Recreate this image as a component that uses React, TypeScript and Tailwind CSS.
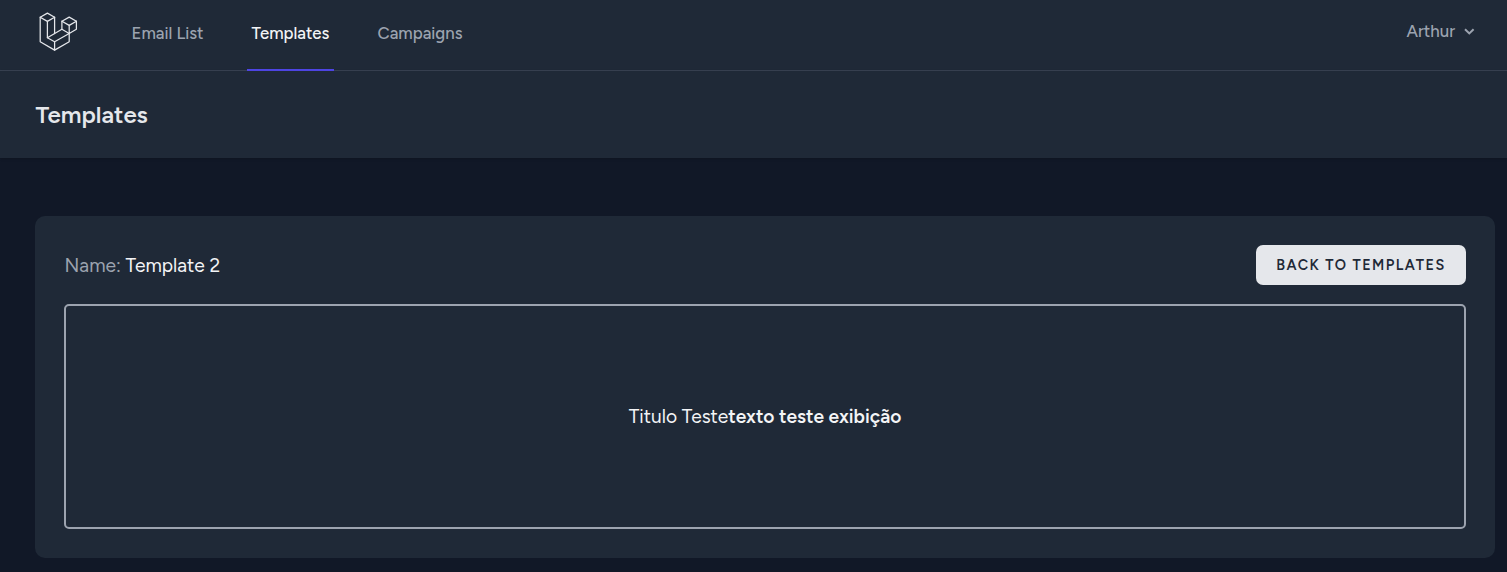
import React from "react";

function Logo() {
  return (
    <svg className="block h-10 w-10" viewBox="0 0 40 40" fill="none" stroke="#e5e7eb" strokeWidth="1.25" strokeLinejoin="round" strokeLinecap="round">
      <path d="M2.2 6.2 9.4 2.1 16.6 6.2 9.4 10.4Z" />
      <path d="M2.2 6.2V30.8L16.6 39.1 31.2 30.8V22.5" />
      <path d="M9.4 10.4V26.7L16.6 30.8V39.1" />
      <path d="M16.6 6.2V22.5" />
      <path d="M9.4 26.7 23.9 18.3 31.2 22.5 16.6 30.8" />
      <path d="M23.9 10.2 31.2 6.1 38.4 10.2 31.2 14.4Z" />
      <path d="M23.9 10.2V18.3M38.4 10.2V18.3L31.2 22.5V14.4" />
    </svg>
  );
}

export default function App() {
  return (
    <div className="flex h-[572px] w-full flex-col overflow-hidden bg-[#111827] font-['Figtree','Inter',sans-serif]">
      <nav className="flex h-[71px] shrink-0 items-stretch justify-between border-b border-[#374151] bg-[#1f2937] pr-[31px] pl-[38px]">
        <div className="flex">
          <div className="pt-[11px]">
            <Logo />
          </div>
          <div className="-mb-px ml-[50px] flex gap-10 text-[16.8px] leading-6 font-medium text-[#9ca3af]">
            <a className="w-[79px] border-b-2 border-transparent pt-[21px] text-center whitespace-nowrap">Email List</a>
            <a className="w-[87px] border-b-2 border-[#4f46e5] pt-[21px] text-center whitespace-nowrap text-[#f3f4f6]">Templates</a>
            <a className="w-[92px] border-b-2 border-transparent pt-[21px] text-center whitespace-nowrap">Campaigns</a>
          </div>
        </div>
        <button className="mt-[19px] flex h-6 items-center gap-[7px] text-[16.8px] leading-6 font-medium text-[#9ca3af]">
          <span>Arthur</span>
          <svg className="h-[14px] w-[14px]" viewBox="0 0 14 14" fill="none" stroke="currentColor" strokeWidth="2">
            <path d="M3 5.2 7.3 9.4 11.6 5.2" />
          </svg>
        </button>
      </nav>
      <header className="flex h-[87px] shrink-0 items-center bg-[#1f2937] pl-[35.4px] shadow">
        <h2 className="text-[24px] leading-7 font-semibold text-[#e5e7eb]">Templates</h2>
      </header>
      <main className="pt-[58px] pr-3 pl-[35px]">
        <section className="h-[342px] rounded-[10px] bg-[#1f2937] p-[29px] text-[19.2px] leading-[29px] text-[#f3f4f6]">
          <div className="flex h-10 items-center justify-between">
            <div className="pl-[0.5px]">
              <span className="text-[#9ca3af]">Name:</span> Template 2
            </div>
            <button className="h-10 w-[210px] rounded-[7px] bg-[#e5e7eb] text-[14.4px] font-semibold tracking-[1.44px] text-[#1f2937]">BACK TO TEMPLATES</button>
          </div>
          <div className="mt-[19px] flex h-[225px] items-center justify-center rounded-[5px] border-2 border-[#9ca3af]">
            <p>
              Titulo Teste<strong className="font-semibold">texto teste exibição</strong>
            </p>
          </div>
        </section>
      </main>
    </div>
  );
}
